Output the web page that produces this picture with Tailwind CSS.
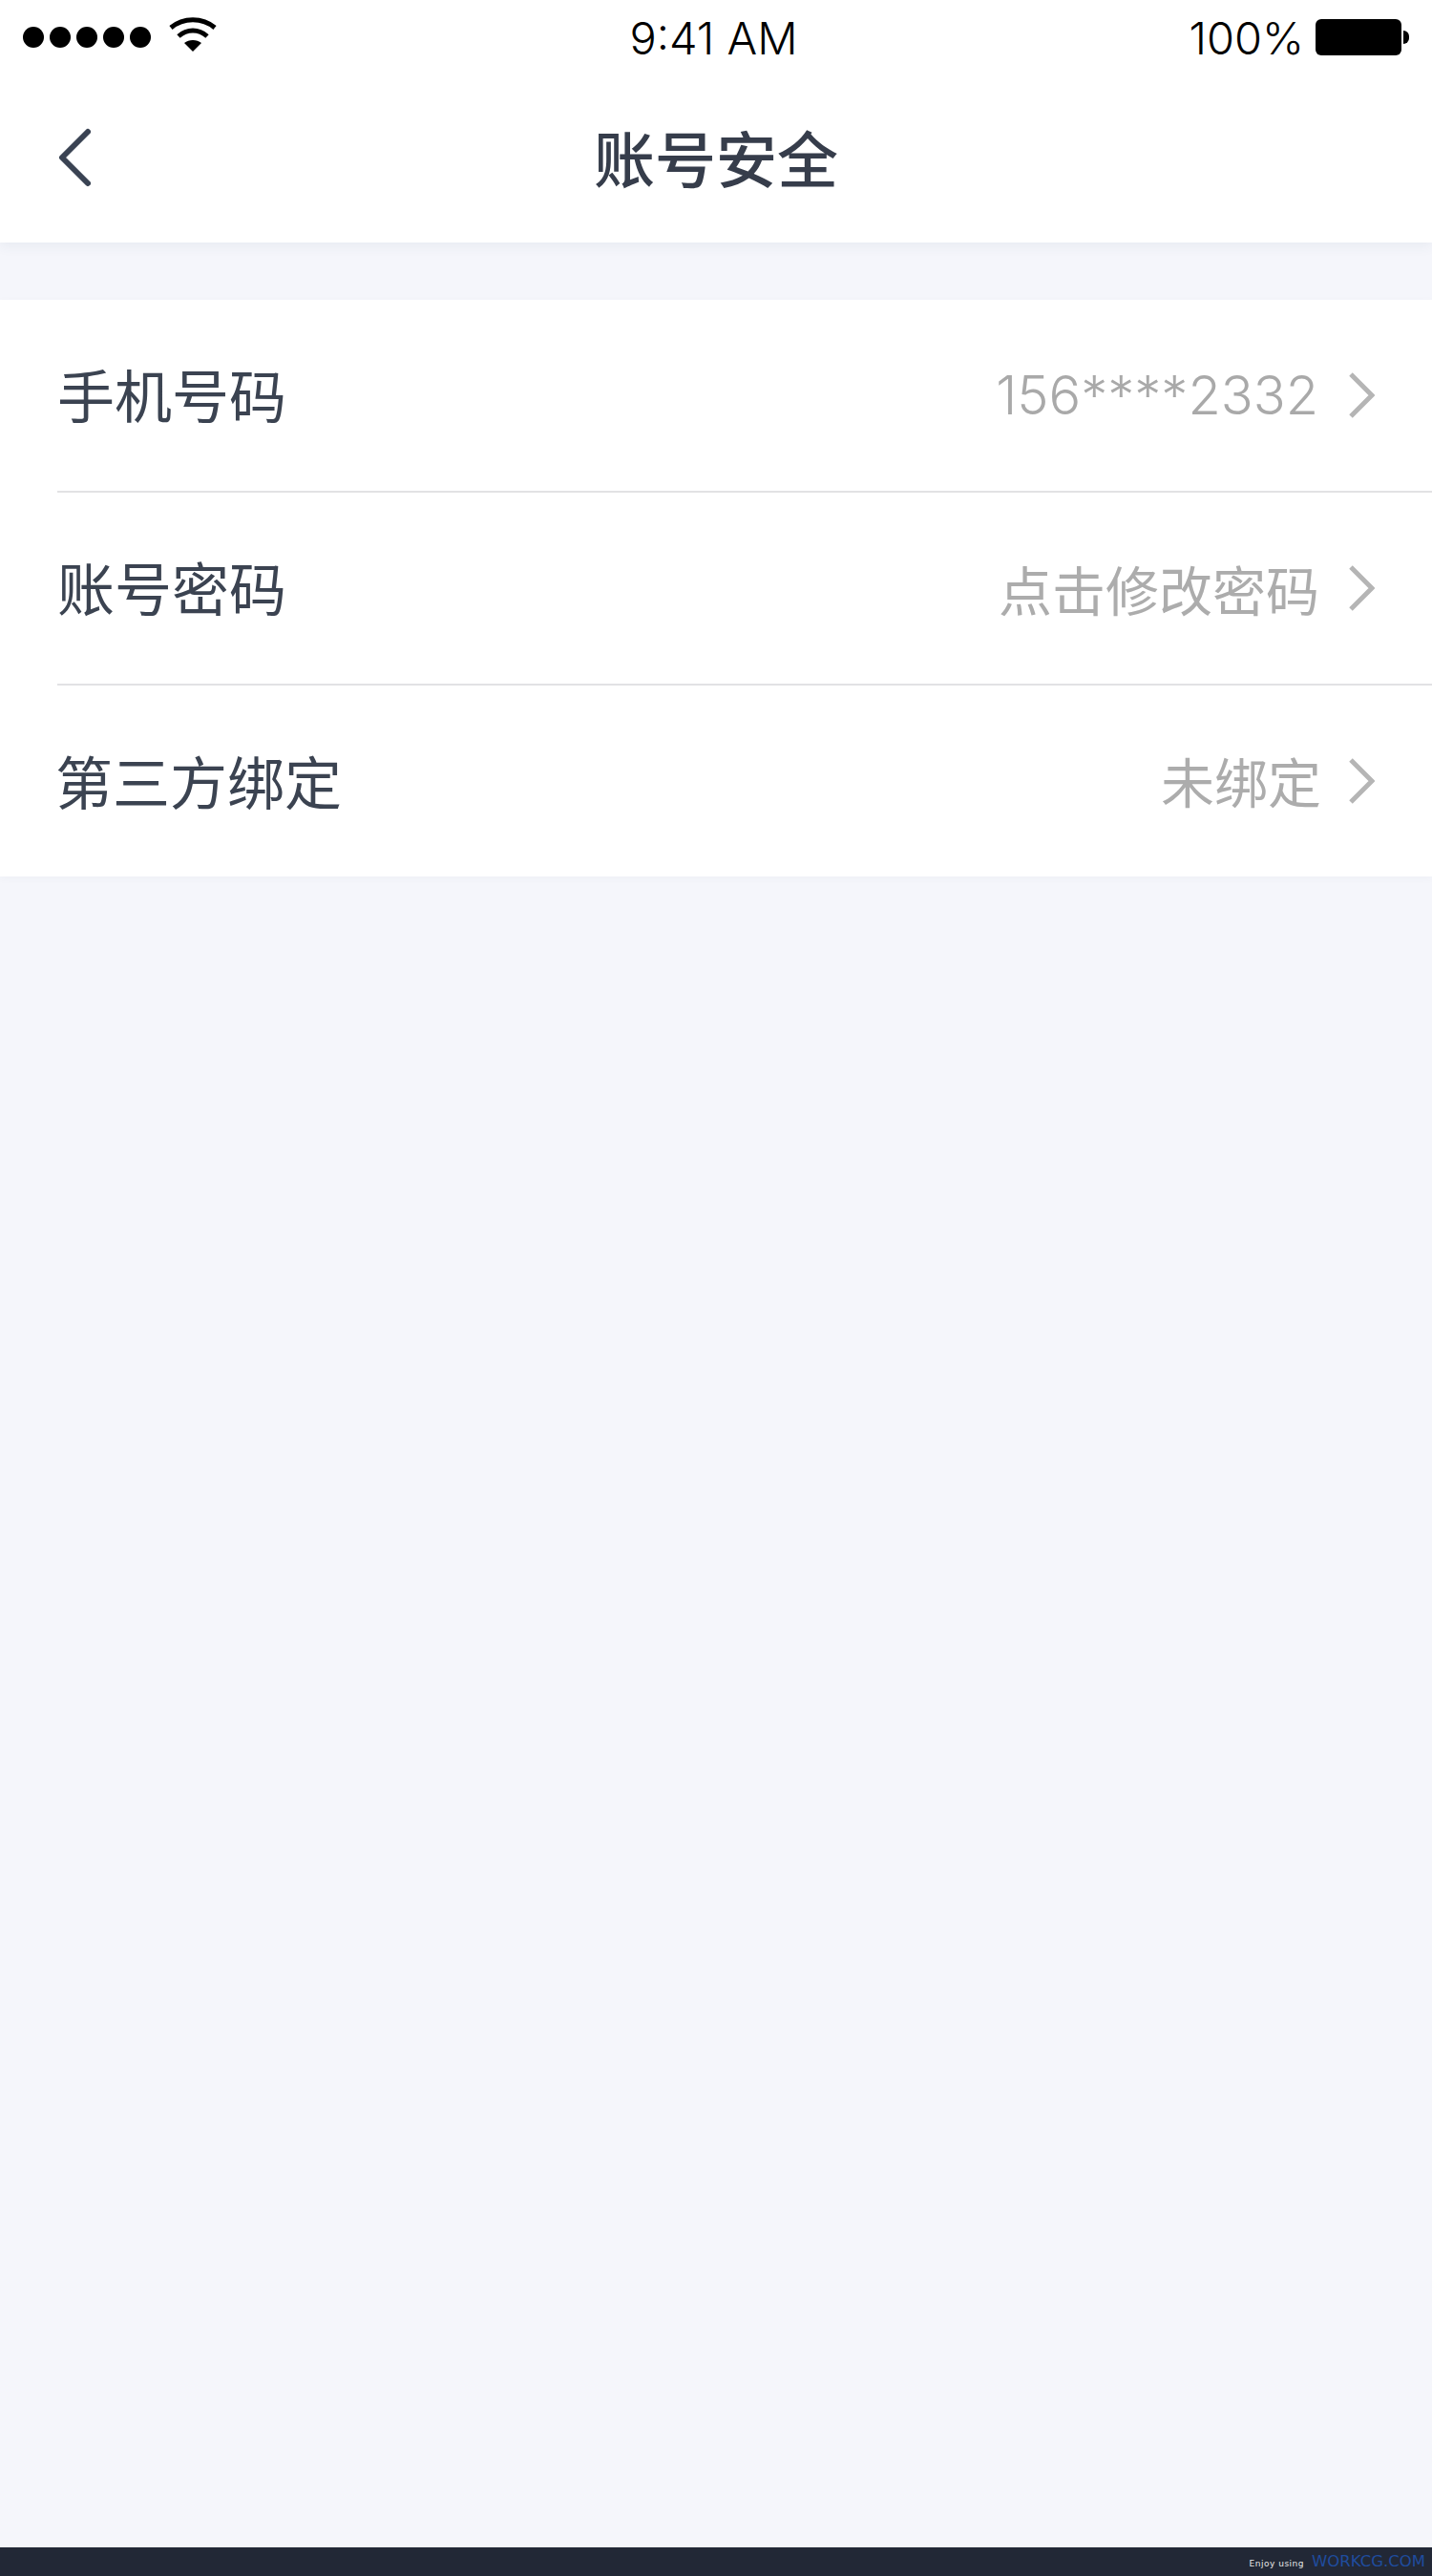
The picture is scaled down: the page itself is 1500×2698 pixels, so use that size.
<!DOCTYPE html>
<html lang="zh-CN">
<head>
<meta charset="utf-8">
<script src="https://cdn.jsdelivr.net/npm/@tailwindcss/browser@4"></script>
<title>账号安全</title>
</head>
<body class="m-0 bg-[#f5f6fb] font-['Noto_Sans_CJK_SC','Liberation_Sans',sans-serif]">
<div class="w-[1500px] h-[2698px] flex flex-col overflow-hidden">
  <header class="h-[254px] shrink-0 bg-white flex flex-col shadow-[0_4px_12px_rgba(60,80,110,0.07)] relative">
    <div class="h-[78px] px-[24px] flex items-center justify-between text-black font-['Inter','Liberation_Sans',sans-serif] font-light text-[47px]">
      <div class="w-[400px] flex items-center">
        <div class="flex gap-[6px]">
          <span class="w-[22px] h-[22px] rounded-full bg-black"></span>
          <span class="w-[22px] h-[22px] rounded-full bg-black"></span>
          <span class="w-[22px] h-[22px] rounded-full bg-black"></span>
          <span class="w-[22px] h-[22px] rounded-full bg-black"></span>
          <span class="w-[22px] h-[22px] rounded-full bg-black"></span>
        </div>
        <svg class="ml-[19px] -mt-[6px]" width="50" height="38" viewBox="0 0 50 38"><path d="M2 12C15 1 35 1 48 12M10 21C19 13 31 13 40 21" fill="none" stroke="#000" stroke-width="5"/><path d="M16 28C21 24 29 24 34 28L25 37Z" fill="#000"/></svg>
      </div>
      <span class="leading-none -ml-[5px]">9:41 AM</span>
      <div class="w-[400px] flex items-center justify-end gap-[12px]">
        <span class="leading-none">100%</span>
        <div class="flex items-center gap-[2px]">
          <span class="block w-[90px] h-[38px] rounded-[6px] bg-black"></span>
          <span class="block w-[6px] h-[14px] rounded-r-[7px] bg-black"></span>
        </div>
      </div>
    </div>
    <div class="flex-1 relative flex items-center justify-center">
      <svg class="absolute left-[59px] top-[55px]" width="36" height="64" viewBox="0 0 36 64"><path d="M33 5L6 32L33 59" fill="none" stroke="#3a4353" stroke-width="6" stroke-linecap="round" stroke-linejoin="round"/></svg>
      <h1 class="m-0 text-[64px] leading-none font-medium text-[#363d4b] -mt-[6px]">账号安全</h1>
    </div>
  </header>

  <section class="mt-[60px] bg-white shadow-[0_2px_8px_rgba(60,80,110,0.04)]">
    <div class="h-[202px] ml-[60px] pr-[60px] flex items-center justify-between border-b-2 border-[#e2e2e4]">
      <span class="-mt-[4px] text-[60px] leading-none text-[#3b4351]">手机号码</span>
      <div class="flex items-center gap-[31px]">
        <span class="text-[56px] leading-none text-[#a9a9a9] font-light font-['Inter','Liberation_Sans',sans-serif]">156****2332</span>
        <svg width="28" height="50" viewBox="0 0 28 50"><path d="M3 3L25 25L3 47" fill="none" stroke="#b5b5b5" stroke-width="5"/></svg>
      </div>
    </div>
    <div class="h-[202px] ml-[60px] pr-[60px] flex items-center justify-between border-b-2 border-[#e2e2e4]">
      <span class="-mt-[4px] text-[60px] leading-none text-[#3b4351]">账号密码</span>
      <div class="flex items-center gap-[30px]">
        <span class="text-[56px] leading-none text-[#acacac]">点击修改密码</span>
        <svg width="28" height="50" viewBox="0 0 28 50"><path d="M3 3L25 25L3 47" fill="none" stroke="#b5b5b5" stroke-width="5"/></svg>
      </div>
    </div>
    <div class="h-[200px] ml-[60px] pr-[60px] flex items-center justify-between">
      <span class="-ml-[2px] -mt-[2px] text-[60px] leading-none text-[#3b4351]">第三方绑定</span>
      <div class="flex items-center gap-[28px]">
        <span class="-mt-[2px] text-[56px] leading-none text-[#acacac]">未绑定</span>
        <svg width="28" height="50" viewBox="0 0 28 50"><path d="M3 3L25 25L3 47" fill="none" stroke="#b5b5b5" stroke-width="5"/></svg>
      </div>
    </div>
  </section>

  <div class="flex-1"></div>

  <footer class="h-[30px] shrink-0 bg-[#222836] flex items-center justify-end pr-[7px] gap-[8px] font-['DejaVu_Sans',sans-serif]">
    <span class="text-[9px] text-[#e8e8e8] tracking-[0.5px] mt-[6px]">Enjoy using</span>
    <span class="text-[16.5px] text-[#1f4c9e] leading-none">WORKCG.COM</span>
  </footer>
</div>
</body>
</html>
